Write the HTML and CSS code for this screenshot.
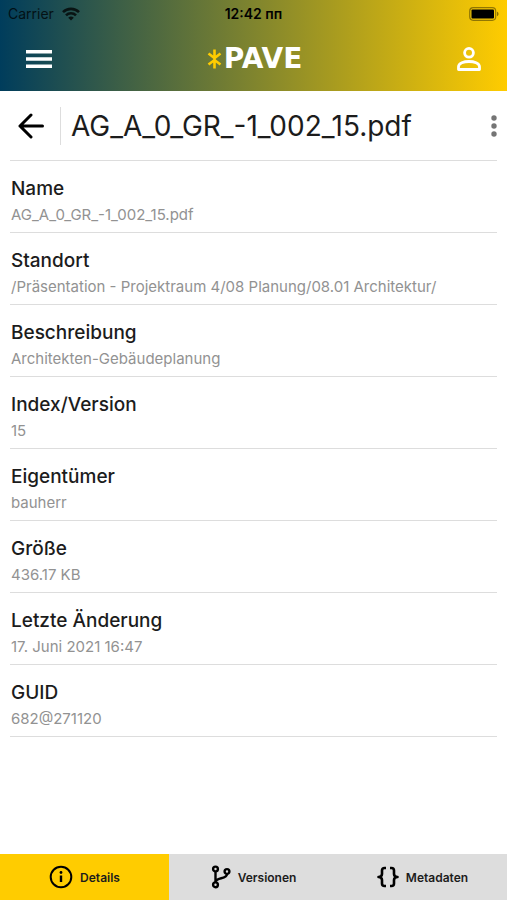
FILE: index.html
```html
<!DOCTYPE html>
<html lang="de">
<head>
<meta charset="utf-8">
<meta name="viewport" content="width=device-width, initial-scale=1">
<title>PAVE</title>
<link rel="stylesheet" href="styles.css">
</head>
<body>
<header class="top">
  <div class="status">
    <span class="carrier">Carrier
      <svg width="18" height="14" viewBox="0 0 18 14" fill="none" stroke="currentColor" stroke-width="2.6" aria-hidden="true"><path d="M1 5.2a11.3 11.3 0 0 1 16 0M4 8.4a7 7 0 0 1 10 0"/><path d="M9 13.6l2.8-2.8a4 4 0 0 0-5.6 0z" fill="currentColor" stroke="none"/></svg>
    </span>
    <span class="time">12:42 пп</span>
    <svg class="battery" width="30" height="14" viewBox="0 0 30 14" aria-hidden="true"><rect x=".7" y=".7" width="26" height="12.6" rx="3.5" fill="none" stroke="#000" stroke-opacity=".4" stroke-width="1.2"/><rect x="2.5" y="2.5" width="22.5" height="9" rx="1" fill="#000"/><path d="M28 4.8c2 .6 2 3.8 0 4.4z" fill="#000" fill-opacity=".45"/></svg>
  </div>
  <div class="bar">
    <button class="icon-btn" type="button" aria-label="Menu"><svg width="26" height="20" viewBox="0 0 26 20" fill="#fff"><path d="M0 1h26v3.600H0zM0 8.200h26v3.600H0zM0 15.400h26V19H0z"/></svg></button>
    <div class="logo">
      <svg width="15" height="20" viewBox="0 0 15 20" fill="none" stroke="#fc0" stroke-width="2.6" aria-hidden="true"><path d="M7.500 .5v19M1.500 4.500l6 4.500 6-4.500M1.500 15.500l6-4.500 6 4.500"/></svg>
      <span>PAVE</span>
    </div>
    <button class="icon-btn" type="button" aria-label="Profil"><svg width="24" height="24" viewBox="0 0 24 24" fill="none" stroke="#fff" stroke-width="2.8"><circle cx="12" cy="5.800" r="4.400"/><path d="M1.500 22.500v-2.700c0-3.600 5.500-5.300 10.500-5.300s10.500 1.700 10.500 5.300v2.700z" stroke-linejoin="round"/></svg></button>
  </div>
</header>
<main class="content">
  <div class="title-row">
    <button class="back" type="button" aria-label="Zurück"><svg width="26" height="26" viewBox="0 0 26 26" fill="none" stroke="#000" stroke-width="3" stroke-linecap="round" stroke-linejoin="round"><path d="M24.500 13H2M13 2 2 13l11 11"/></svg></button>
    <h1>AG_A_0_GR_-1_002_15.pdf</h1>
    <button class="more" type="button" aria-label="Mehr"><svg width="6" height="22" viewBox="0 0 6 22" fill="#757575"><circle cx="3" cy="3" r="2.700"/><circle cx="3" cy="11" r="2.700"/><circle cx="3" cy="19" r="2.700"/></svg></button>
  </div>
  <dl class="fields">
    <div class="field"><dt>Name</dt><dd>AG_A_0_GR_-1_002_15.pdf</dd></div>
    <div class="field"><dt>Standort</dt><dd>/Präsentation - Projektraum 4/08 Planung/08.01 Architektur/</dd></div>
    <div class="field"><dt>Beschreibung</dt><dd>Architekten-Gebäudeplanung</dd></div>
    <div class="field"><dt>Index/Version</dt><dd>15</dd></div>
    <div class="field"><dt>Eigentümer</dt><dd>bauherr</dd></div>
    <div class="field"><dt>Größe</dt><dd>436.17 KB</dd></div>
    <div class="field"><dt>Letzte Änderung</dt><dd>17. Juni 2021 16:47</dd></div>
    <div class="field"><dt>GUID</dt><dd>682@271120</dd></div>
  </dl>
</main>
<nav class="tabs">
  <button class="tab active" type="button"><svg width="24" height="24" viewBox="0 0 24 24" fill="none" stroke="#000" stroke-width="2"><circle cx="12" cy="12" r="10.300"/><path d="M12 10.500V17" stroke-width="2.400"/><circle cx="12" cy="7.500" r="1.400" fill="#000" stroke="none"/></svg>Details</button>
  <button class="tab" type="button"><svg width="20" height="24" viewBox="0 0 20 24" fill="none" stroke="#000" stroke-width="2.400"><circle cx="4.500" cy="4" r="2.400"/><circle cx="4.500" cy="19.800" r="2.400"/><circle cx="16" cy="6.500" r="2.400"/><path d="M4.500 6.500v11M16 9c0 6-11.500 2.500-11.500 8.500"/></svg>Versionen</button>
  <button class="tab" type="button"><svg width="22" height="22" viewBox="0 0 22 22" fill="none" stroke="#000" stroke-width="2.600" stroke-linejoin="round"><path d="M9 2H7.500Q5 2 5 4.500V8q0 3-3.500 3Q5 11 5 14v3.500Q5 20 7.500 20H9M13 2h1.500Q17 2 17 4.500V8q0 3 3.500 3-3.500 0-3.500 3v3.500q0 2.500-2.500 2.500H13"/></svg>Metadaten</button>
</nav>
</body>
</html>
```

FILE: styles.css
```css
* { box-sizing: border-box; }

body {
  margin: 0;
  min-height: 100vh;
  display: flex;
  flex-direction: column;
  background: #fff;
  color: #1c1c1c;
  font-family: Inter, "Liberation Sans", sans-serif;
}

button {
  padding: 0;
  border: 0;
  background: none;
  color: inherit;
  font: inherit;
}

svg { display: block; flex: none; }

.top {
  height: 91px;
  background: linear-gradient(90deg, #003d5c, #fc0);
}

.status {
  display: grid;
  grid-template-columns: 1fr auto 1fr;
  align-items: center;
  height: 27px;
  padding: 0 8px;
  color: #000;
  font-size: 14px;
}

.carrier {
  display: flex;
  align-items: center;
  gap: 8px;
  opacity: 0.75;
}

.time { font-weight: 600; }
.battery { justify-self: end; }

.bar {
  display: flex;
  align-items: center;
  justify-content: space-between;
  height: 64px;
  padding: 0 26px;
}

.logo {
  display: flex;
  align-items: center;
  gap: 2px;
  color: #fff;
  font: bold 28px/30px "DejaVu Sans", sans-serif;
}

.content { flex: 1; padding: 0 10px; }

.title-row {
  display: flex;
  align-items: center;
  height: 70px;
  border-bottom: 1px solid #ddd;
}

.back {
  height: 38px;
  padding: 0 16px 0 8px;
  border-right: 1px solid #ddd;
}

h1 {
  flex: 1;
  margin: 0;
  padding-left: 10px;
  font-size: 28px;
  font-weight: 400;
  line-height: 36px;
}

.fields { margin: 0; }

.field {
  height: 72px;
  padding: 15px 1px 0;
  border-bottom: 1px solid #ddd;
}

dt {
  font-size: 19px;
  font-weight: 500;
  line-height: 26px;
}

dd {
  margin: 3px 0 0;
  color: #929292;
  font-size: 15px;
  line-height: 20px;
}

.tabs {
  display: grid;
  grid-template-columns: repeat(3, 1fr);
  height: 46px;
  background: #ddd;
}

.tab {
  display: flex;
  align-items: center;
  justify-content: center;
  gap: 7px;
  font-size: 12px;
  font-weight: 600;
}

.active { background: #fc0; }
```
